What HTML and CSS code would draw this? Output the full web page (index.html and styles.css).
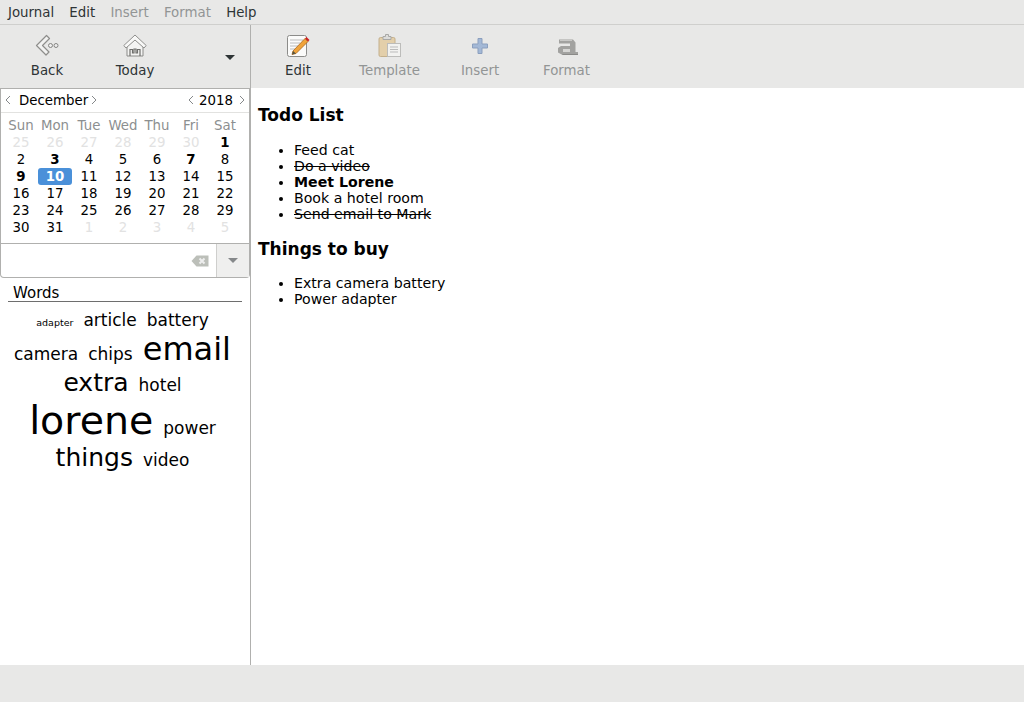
FILE: index.html
```html
<!DOCTYPE html>
<html lang="en">
<head>
  <meta charset="UTF-8" />
  <meta name="viewport" content="width=device-width, initial-scale=1" />
  <title>RedNotebook</title>
  <link rel="stylesheet" href="styles.css">
</head>
<body>
  <nav class="menubar">
    <span class="menu-item">Journal</span>
    <span class="menu-item">Edit</span>
    <span class="menu-item off">Insert</span>
    <span class="menu-item off">Format</span>
    <span class="menu-item">Help</span>
  </nav>

  <div class="main">
    <aside class="side">
      <div class="toolbar side-toolbar">
        <div class="tool tool-back">
          <svg width="24" height="24" viewBox="0 0 24 24">
            <path d="M11.500 1.500 1.500 11.500l9.500 9.500 3-3-6.500-6.500 7-7z" fill="#f2f2f1" stroke="#8e8e8c" stroke-width="1.200" stroke-linejoin="round"/>
            <circle cx="15.500" cy="11.500" r="2" fill="#eee" stroke="#858583"/>
            <circle cx="21" cy="11.500" r="2" fill="#eee" stroke="#858583"/>
          </svg>
          <span>Back</span>
        </div>
        <div class="tool tool-today">
          <svg width="24" height="24" viewBox="0 0 24 24">
            <path d="M4 12 12 5l8 7v10H4z" fill="#f4f4f3" stroke="#8a8a88"/>
            <path d="M12 1 .8 11.500l2.200 2.500L12 6l9 8 2.200-2.500z" fill="#f8f8f7" stroke="#8f8f8d" stroke-linejoin="round"/>
            <path d="M7 22v-6.500h2.500v3.500h1.500v-4h2v4h1.500v-3.500H17V22" fill="none" stroke="#6f6f6d" stroke-width="1.200"/>
          </svg>
          <span>Today</span>
        </div>
        <span class="tool-arrow"></span>
      </div>

      <section class="calendar">
        <div class="cal-head">
          <svg class="chev" width="6" height="10" viewBox="0 0 6 10"><path d="M5 1 1 5l4 4"/></svg>
          <span class="cal-month">December</span>
          <svg class="chev" width="6" height="10" viewBox="0 0 6 10"><path d="M1 1l4 4-4 4"/></svg>
          <span class="cal-spacer"></span>
          <svg class="chev" width="6" height="10" viewBox="0 0 6 10"><path d="M5 1 1 5l4 4"/></svg>
          <span class="cal-year">2018</span>
          <svg class="chev" width="6" height="10" viewBox="0 0 6 10"><path d="M1 1l4 4-4 4"/></svg>
        </div>
        <div class="cal-grid">
          <span class="wd">Sun</span><span class="wd">Mon</span><span class="wd">Tue</span><span class="wd">Wed</span><span class="wd">Thu</span><span class="wd">Fri</span><span class="wd">Sat</span>
          <span class="out">25</span><span class="out">26</span><span class="out">27</span><span class="out">28</span><span class="out">29</span><span class="out">30</span><span class="mark">1</span>
          <span>2</span><span class="mark">3</span><span>4</span><span>5</span><span>6</span><span class="mark">7</span><span>8</span>
          <span class="mark">9</span><span class="today">10</span><span>11</span><span>12</span><span>13</span><span>14</span><span>15</span>
          <span>16</span><span>17</span><span>18</span><span>19</span><span>20</span><span>21</span><span>22</span>
          <span>23</span><span>24</span><span>25</span><span>26</span><span>27</span><span>28</span><span>29</span>
          <span>30</span><span>31</span><span class="out">1</span><span class="out">2</span><span class="out">3</span><span class="out">4</span><span class="out">5</span>
        </div>
      </section>

      <div class="search">
        <div class="search-entry">
          <svg width="18" height="12" viewBox="0 0 18 12">
            <path d="M5.500 .5H17.500V11.500H5.500L.5 6z" fill="#bcbfb9"/>
            <path d="M8.500 3.500l5 5m0-5l-5 5" stroke="#eee" stroke-width="2"/>
          </svg>
        </div>
        <div class="search-drop"><span class="drop-arrow"></span></div>
      </div>

      <section class="words">
        <div class="words-title">Words</div>
        <div class="cloud">
          <div class="cloud-line line-1"><span class="w10">adapter</span><span class="w17">article</span><span class="w17">battery</span></div>
          <div class="cloud-line line-2"><span class="w17">camera</span><span class="w17">chips</span><span class="w32">email</span></div>
          <div class="cloud-line line-3"><span class="w25">extra</span><span class="w17">hotel</span></div>
          <div class="cloud-line line-4"><span class="w40">lorene</span><span class="w17">power</span></div>
          <div class="cloud-line line-5"><span class="w25">things</span><span class="w17">video</span></div>
        </div>
      </section>
    </aside>

    <div class="content">
      <div class="toolbar content-toolbar">
        <div class="tool tool-edit">
          <svg width="24" height="24" viewBox="0 0 24 24">
            <rect x="1.500" y="1.500" width="19" height="21" rx="2" fill="#fbfbfa" stroke="#8c8c8a"/>
            <path d="M4 6h13M4 9h10M4 12h8M4 15h5" stroke="#bbb"/>
            <path d="M7 17 19 4.500l3 3L10 19.500l-4 1z" fill="#f0a33a" stroke="#a9641a" stroke-width=".8"/>
            <path d="M19 4.500l1.500-1.500 3 3-1.500 1.500z" fill="#cc2020"/>
            <path d="M7 17l-1 3.500 4-1z" fill="#554"/>
          </svg>
          <span>Edit</span>
        </div>
        <div class="tool tool-template off">
          <svg width="24" height="24" viewBox="0 0 24 24">
            <rect x="1" y="3.500" width="16" height="19" rx="1.500" fill="#e3cfaa" stroke="#c4b08c"/>
            <path d="M5 5.500V2.500h2.500V.5h3v2H13v3z" fill="#dcdcda" stroke="#a8a8a6"/>
            <rect x="9.500" y="9.500" width="13" height="13" fill="#f2f2f0" stroke="#bcbcba"/>
            <path d="M12 13h8M12 15.500h8M12 18h8" stroke="#bbb"/>
          </svg>
          <span>Template</span>
        </div>
        <div class="tool tool-insert off">
          <svg width="24" height="24" viewBox="0 0 24 24">
            <path d="M10 4.500h4v5.500h5.500v4H14v5.500h-4V14H4.500v-4H10z" fill="#a3b8d6" stroke="#8b9fbe"/>
          </svg>
          <span>Insert</span>
        </div>
        <div class="tool tool-format off">
          <svg width="24" height="24" viewBox="0 0 24 24">
            <path d="M4 5.500h14l2.500 3V18H23v3H7.500L3 18.500V14l3-2h9V9.500H4z" fill="#a2a2a0"/>
            <path d="M8 15h7v3H8z" fill="#d6d6d4"/>
            <path d="M5 6.500h12" stroke="#c8c8c6"/>
            <path d="M7.500 20.500H23" stroke="#8a8a88"/>
          </svg>
          <span>Format</span>
        </div>
      </div>

      <article class="page">
        <h2>Todo List</h2>
        <ul>
          <li>Feed cat</li>
          <li><s>Do a video</s></li>
          <li><b>Meet Lorene</b></li>
          <li>Book a hotel room</li>
          <li><s>Send email to Mark</s></li>
        </ul>
        <h2 class="second">Things to buy</h2>
        <ul>
          <li>Extra camera battery</li>
          <li>Power adapter</li>
        </ul>
      </article>
    </div>
  </div>

  <footer class="statusbar"></footer>
</body>
</html>
```

FILE: styles.css
```css
* {
  box-sizing: border-box;
}
html,
body {
  height: 100%;
}
body {
  margin: 0;
  display: flex;
  flex-direction: column;
  overflow: hidden;
  font-family: "DejaVu Sans", sans-serif;
  font-size: 13.33px;
  color: #000;
  background-color: #e8e8e7;
}

/* Menu */
.menubar {
  flex: 0 0 25px;
  display: flex;
  align-items: center;
  gap: 15.25px;
  padding: 0 8px;
  border-bottom: 1px solid #cfcfcd;
  color: #2e3436;
}
.off {
  color: #929595;
}

.main {
  flex: 1;
  display: flex;
  min-height: 0;
}
.side {
  flex: 0 0 251px;
  display: flex;
  flex-direction: column;
  background-color: #fff;
  border-right: 1px solid #b0b0ae;
}
.content {
  flex: 1;
  display: flex;
  flex-direction: column;
}

/* Toolbars */
.toolbar {
  flex: 0 0 63px;
  display: flex;
  background-color: #e8e8e7;
}
.tool {
  display: flex;
  flex-direction: column;
  align-items: center;
  padding-top: 9px;
  gap: 5px;
  color: #2e3436;
}
.tool.off {
  color: #929595;
}
.tool svg {
  display: block;
}
.tool-back {
  width: 94px;
}
.tool-today {
  width: 82px;
}
.tool-arrow {
  width: 0;
  height: 0;
  margin: 30px 0 0 49px;
  border-left: 5px solid transparent;
  border-right: 5px solid transparent;
  border-top: 5px solid #2e3436;
}
.tool-edit {
  width: 94px;
}
.tool-template {
  width: 89px;
}
.tool-insert {
  width: 92px;
}
.tool-format {
  width: 81px;
}

/* Calendar */
.calendar {
  flex: 0 0 156px;
  border: 1px solid #b0b0ae;
}
.cal-head {
  height: 24px;
  display: flex;
  align-items: center;
  border-bottom: 1px solid #e2e2e0;
  padding: 0 4px 1px 4px;
}
.chev {
  display: block;
  flex: none;
  fill: none;
  stroke: #85888a;
}
.cal-month {
  margin: 0 3px 0 8px;
}
.cal-year {
  margin: 0 6px 0 5px;
}
.cal-spacer {
  flex: 1;
}
.cal-grid {
  display: grid;
  grid-template-columns: repeat(7, 34px);
  grid-auto-rows: 17px;
  padding: 4px 0 0 3px;
  line-height: 17px;
  text-align: center;
}
.wd {
  color: #8c8f90;
}
.out {
  color: #e2e2e2;
}
.mark {
  font-weight: bold;
}
.today {
  font-weight: bold;
  color: #fff;
  background-color: #4a90d9;
  border-radius: 3px;
}

/* Search */
.search {
  flex: 0 0 34px;
  display: flex;
  border: 1px solid #b0b0ae;
  border-top: none;
  border-radius: 0 0 4px 4px;
}
.search-entry {
  flex: 1;
  display: flex;
  align-items: center;
  justify-content: flex-end;
  padding-right: 7px;
}
.search-drop {
  flex: 0 0 33px;
  display: flex;
  align-items: center;
  justify-content: center;
  border-left: 1px solid #cfcfcd;
  background-color: #efefee;
}
.drop-arrow {
  width: 0;
  height: 0;
  border-left: 5px solid transparent;
  border-right: 5px solid transparent;
  border-top: 5px solid #85888a;
}

/* Word cloud */
.words {
  padding: 6px 8px 0;
}
.words-title {
  height: 18px;
  font-size: 15px;
  line-height: 19px;
  padding-left: 5px;
  border-bottom: 1px solid #6e6e6e;
}
.cloud {
  padding: 10px 5px 0 0;
}
.cloud-line {
  display: flex;
  justify-content: center;
  align-items: baseline;
  gap: 10px;
  line-height: 1;
}
.line-1 {
  height: 21px;
}
.line-2 {
  height: 37px;
}
.line-3 {
  height: 31px;
}
.line-4 {
  height: 44px;
}
.line-5 {
  height: 30px;
}
.w10 {
  font-size: 9.5px;
}
.w17 {
  font-size: 17px;
}
.w25 {
  font-size: 25px;
}
.w32 {
  font-size: 32px;
}
.w40 {
  font-size: 39.500px;
}

/* Page */
.page {
  flex: 1;
  padding: 0 7px;
  background-color: #fff;
  font-size: 14.15px;
  line-height: 16px;
}
.page h2 {
  margin: 16px 0 16px;
  font-size: 17px;
  line-height: 22px;
}
.page h2.second {
  margin-bottom: 15px;
}
.page ul {
  margin: 0;
  padding-left: 36px;
}
.statusbar {
  flex: 0 0 37px;
  background-color: #e8e8e7;
}
```
